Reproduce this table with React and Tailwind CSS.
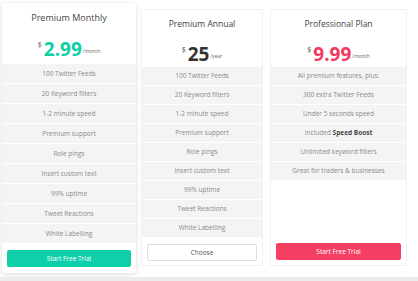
const monthly = [
  '100 Twitter Feeds',
  '20 Keyword filters',
  '1-2 minute speed',
  'Premium support',
  'Role pings',
  'Insert custom text',
  '99% uptime',
  'Tweet Reactions',
  'White Labelling',
];

const pro = [
  'All premium features, plus:',
  '300 extra Twitter Feeds',
  'Under 5 seconds speed',
  <span>Included <b className="font-bold text-[#444]">Speed Boost</b></span>,
  'Unlimited keyword filters',
  'Great for traders & businesses',
];

function Price({ amount, unit, color }) {
  return (
    <div className="flex items-end justify-center">
      <span className="mb-[9px] mr-[2px] text-[7px] text-[#555]">$</span>
      <span className={`text-[19px] font-bold leading-[22px] ${color}`}>{amount}</span>
      <span className="mb-[4px] ml-[1px] text-[5px] text-[#666]">{unit}</span>
    </div>
  );
}

function Rows({ items, h }) {
  return (
    <ul>
      {items.map((f, i) => (
        <li
          key={i}
          className={`flex items-center justify-center border-b border-white bg-[#f4f4f4] text-[6.5px] text-[#8a8a8a] ${h}`}
        >
          {f}
        </li>
      ))}
    </ul>
  );
}

export default function App() {
  return (
    <div className="flex h-[281px] w-[418px] flex-col bg-white font-['Open_Sans',sans-serif]">
      <div className="flex flex-1 items-start gap-[5px] pl-[2px] pt-[3px]">
        <div className="flex h-[270px] w-[134px] flex-col rounded-[3px] bg-white shadow-[0_1px_5px_rgba(0,0,0,0.15)]">
          <div className="h-[61px]">
            <h2 className="pt-[8px] text-center text-[9px] font-medium text-[#444]">Premium Monthly</h2>
            <div className="mt-[13px]">
              <Price amount="2.99" unit="/month" color="text-[#0fcfa6]" />
            </div>
          </div>
          <Rows items={monthly} h="h-[20px]" />
          <div className="px-[5px] pt-[6px]">
            <button className="flex h-[17px] w-full items-center justify-center rounded-[2px] bg-[#0fcfab] text-[6.5px] font-medium text-white">
              Start Free Trial
            </button>
          </div>
        </div>

        <div className="mt-[6px] flex h-[257px] w-[122px] flex-col rounded-[2px] border border-[#f0f0f0] bg-white">
          <div className="h-[57px]">
            <h2 className="pt-[8px] text-center text-[8.5px] font-medium text-[#444]">Premium Annual</h2>
            <div className="mt-[12px]">
              <Price amount="25" unit="/year" color="text-[#333]" />
            </div>
          </div>
          <Rows items={monthly} h="h-[19px]" />
          <div className="px-[5px] pt-[6px]">
            <button className="flex h-[17px] w-full items-center justify-center rounded-[2px] border border-[#ddd] bg-white text-[6.5px] text-[#555]">
              Choose
            </button>
          </div>
        </div>

        <div className="ml-[2px] mt-[6px] flex h-[257px] w-[137px] flex-col rounded-[2px] border border-[#f0f0f0] bg-white">
          <div className="h-[57px]">
            <h2 className="pt-[8px] text-center text-[8.5px] font-medium text-[#444]">Professional Plan</h2>
            <div className="mt-[12px]">
              <Price amount="9.99" unit="/month" color="text-[#f4395e]" />
            </div>
          </div>
          <Rows items={pro} h="h-[19px]" />
          <div className="flex-1" />
          <div className="px-[5px] pb-[5px]">
            <button className="flex h-[17px] w-full items-center justify-center rounded-[2px] bg-[#f43f63] text-[6.5px] font-medium text-white">
              Start Free Trial
            </button>
          </div>
        </div>
      </div>
      <div className="h-[4px] bg-[#ececec]" />
    </div>
  );
}
